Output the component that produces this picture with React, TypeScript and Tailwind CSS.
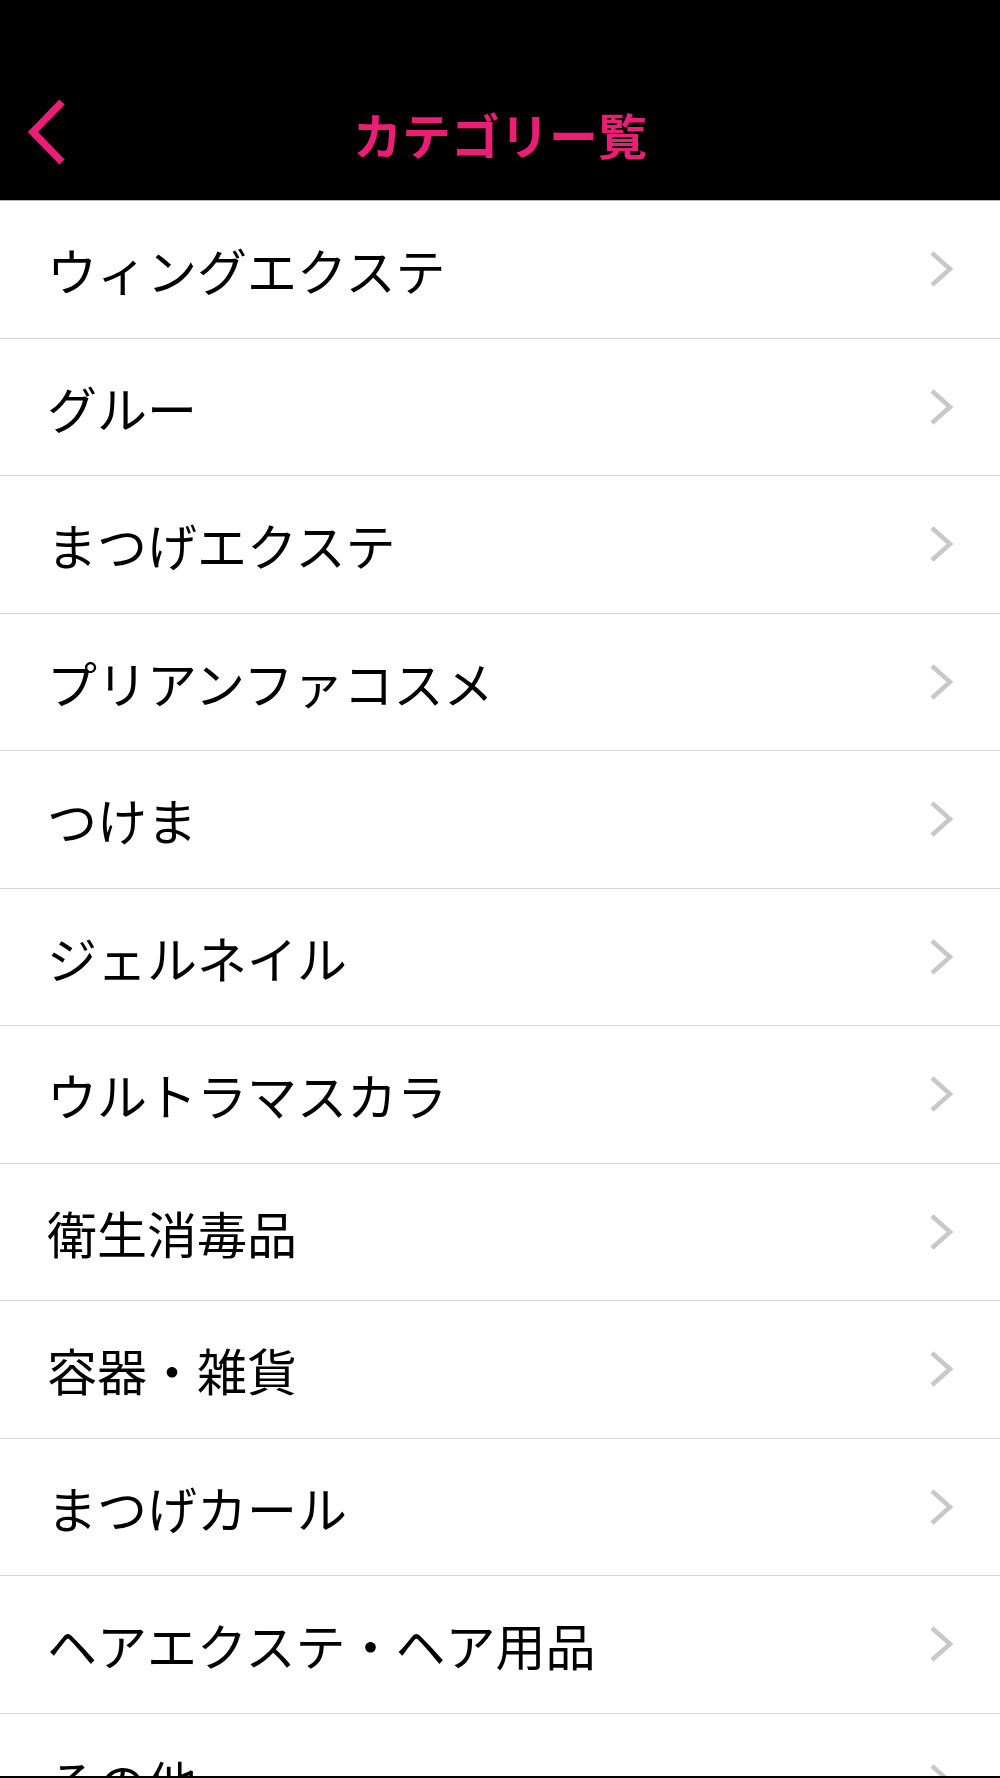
import React from "react";

const items = [
  "ウィングエクステ",
  "グルー",
  "まつげエクステ",
  "プリアンファコスメ",
  "つけま",
  "ジェルネイル",
  "ウルトラマスカラ",
  "衛生消毒品",
  "容器・雑貨",
  "まつげカール",
  "ヘアエクステ・ヘア用品",
  "その他",
];

function BackIcon() {
  return (
    <svg width="50" height="80" viewBox="0 0 50 80" fill="none">
      <polyline
        points="42,9 13,39 42,69"
        stroke="#e91e74"
        strokeWidth="7.5"
        strokeLinecap="butt"
        strokeLinejoin="miter"
      />
    </svg>
  );
}

function ChevronRight() {
  return (
    <svg width="30" height="40" viewBox="0 0 30 40" fill="none">
      <polyline
        points="6,4 24,20 6,36"
        stroke="#c7c7cc"
        strokeWidth="4.5"
        strokeLinecap="butt"
        strokeLinejoin="miter"
      />
    </svg>
  );
}

export default function App() {
  return (
    <div
      className="flex h-[1778px] w-full flex-col overflow-hidden bg-white"
      style={{ fontFamily: '"Noto Sans CJK JP", "Noto Sans", sans-serif' }}
    >
      <header className="flex h-[201px] shrink-0 flex-col border-b border-[#b4b4b4] bg-black">
        <div className="h-[88px]" />
        <div className="grid h-[90px] grid-cols-[1fr_auto_1fr] items-center">
          <div className="flex items-center pl-[20px]">
            <BackIcon />
          </div>
          <h1 className="text-[49px] font-bold leading-none text-[#e91e74]">
            カテゴリー覧
          </h1>
          <div />
        </div>
      </header>
      <ul className="min-h-0 flex-1 overflow-hidden">
        {items.map((item) => (
          <li
            key={item}
            className="flex h-[137.5px] items-center justify-between border-b border-[#d6d6da] pl-[47px] pr-[44px]"
          >
            <span className="text-[50px] leading-none text-black">{item}</span>
            <ChevronRight />
          </li>
        ))}
      </ul>
      <div className="h-[2px] shrink-0 bg-black" />
    </div>
  );
}
